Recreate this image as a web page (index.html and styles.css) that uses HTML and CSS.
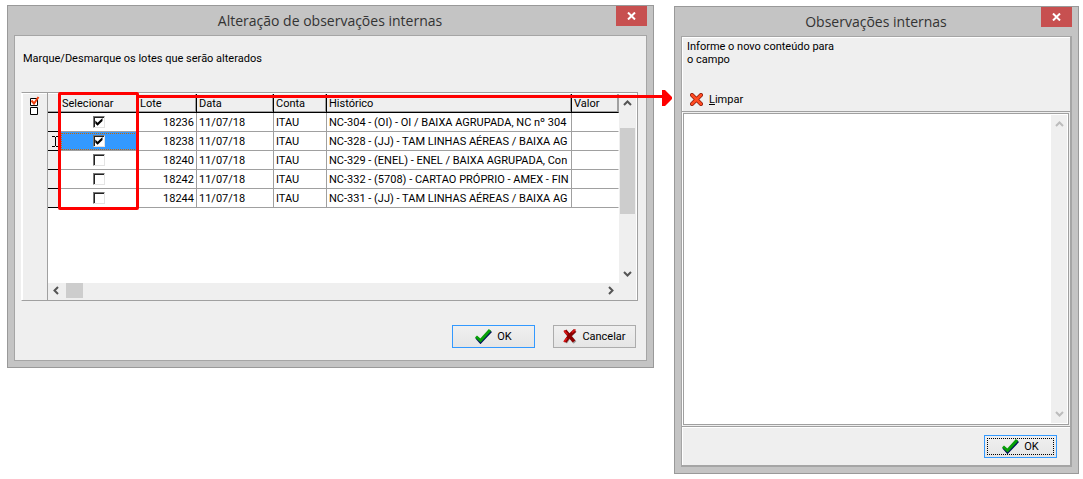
FILE: index.html
```html
<!DOCTYPE html>
<html lang="pt-BR">
<head>
<meta charset="utf-8">
<title>Alteração de observações internas</title>
<link rel="stylesheet" href="styles.css">
</head>
<body>
<main class="desktop">
  <section class="window window-lots">
    <header class="titlebar">
      <h1 class="title">Alteração de observações internas</h1>
      <button class="close" type="button" aria-label="Fechar"><svg width="9" height="8" viewBox="0 0 9 8"><path d="M1 0.5 8 7.5M8 0.5 1 7.5" stroke="#fff" stroke-width="2"/></svg></button>
    </header>
    <div class="client client-lots">
      <p class="intro">Marque/Desmarque os lotes que serão alterados</p>
      <div class="lots">
        <div class="side">
          <button class="toggle-all" type="button" aria-label="Marcar ou desmarcar todos">
            <svg width="11" height="20" viewBox="0 0 11 20" fill="none"><path d="M1.500 3.500h7v7h-7z M1.500 12.500h7v7h-7z" stroke="#000" fill="#fff"/><path d="M2.500 5.500 5 8.500 9.500 2" stroke="#f04010" stroke-width="2"/></svg>
          </button>
        </div>
        <div class="grid">
          <div class="viewport">
            <table class="table">
              <colgroup><col class="c-mark"><col class="c-sel"><col class="c-lot"><col class="c-date"><col class="c-acc"><col><col class="c-val"></colgroup>
              <thead><tr><th></th><th>Selecionar</th><th>Lote</th><th>Data</th><th>Conta</th><th>Histórico</th><th>Valor</th></tr></thead>
              <tbody>
                <tr><td class="mark"></td><td class="pick"><input type="checkbox" checked aria-label="Lote 18236"></td><td class="num">18236</td><td>11/07/18</td><td>ITAU</td><td>NC-304 - (OI) - OI / BAIXA AGRUPADA, NC nº 304</td><td></td></tr>
                <tr><td class="mark"><svg width="7" height="11" viewBox="0 0 7 11"><path d="M0 .5h3M4 .5h3M0 10.500h3M4 10.500h3M3.500 1v9" stroke="#000" stroke-width="1"/></svg></td><td class="pick current"><input type="checkbox" checked aria-label="Lote 18238"></td><td class="num">18238</td><td>11/07/18</td><td>ITAU</td><td>NC-328 - (JJ) - TAM LINHAS AÉREAS / BAIXA AG</td><td></td></tr>
                <tr><td class="mark"></td><td class="pick"><input type="checkbox" aria-label="Lote 18240"></td><td class="num">18240</td><td>11/07/18</td><td>ITAU</td><td>NC-329 - (ENEL) - ENEL / BAIXA AGRUPADA, Con</td><td></td></tr>
                <tr><td class="mark"></td><td class="pick"><input type="checkbox" aria-label="Lote 18242"></td><td class="num">18242</td><td>11/07/18</td><td>ITAU</td><td>NC-332 - (5708) - CARTAO PRÓPRIO - AMEX - FIN</td><td></td></tr>
                <tr><td class="mark"></td><td class="pick"><input type="checkbox" aria-label="Lote 18244"></td><td class="num">18244</td><td>11/07/18</td><td>ITAU</td><td>NC-331 - (JJ) - TAM LINHAS AÉREAS / BAIXA AG</td><td></td></tr>
              </tbody>
            </table>
          </div>
          <div class="vbar">
            <svg width="9" height="6" viewBox="0 0 9 6"><path d="M1 5 4.500 1.500 8 5" class="chev"/></svg>
            <span class="vthumb"></span>
            <svg width="9" height="6" viewBox="0 0 9 6"><path d="M1 1 4.500 4.500 8 1" class="chev"/></svg>
          </div>
          <div class="hbar">
            <svg width="6" height="9" viewBox="0 0 6 9"><path d="M5 1 1.500 4.500 5 8" class="chev"/></svg>
            <span class="hthumb"></span>
            <svg width="6" height="9" viewBox="0 0 6 9"><path d="M1 1 4.500 4.500 1 8" class="chev"/></svg>
          </div>
        </div>
        <div class="highlight"></div>
        <div class="arrow"></div>
      </div>
      <div class="actions">
        <button class="btn btn-default" type="button"><svg width="17" height="15" viewBox="0 0 17 15" fill="none"><path d="M1.500 8.500 5.500 13 16 2" stroke="#00105c" stroke-width="3"/><path d="M1 7.500 5.500 11.500 15 1" stroke="#08a008" stroke-width="3"/></svg><span>OK</span></button>
        <button class="btn" type="button"><svg width="14" height="15" viewBox="0 0 14 15" fill="none"><path d="M2.500 2.500 12 13.500M12.500 1.500Q7 6 2.500 13.500" stroke="#999" stroke-width="3.500"/><path d="M2 1.500 11 12.500M12 1.500Q6 6 2 13" stroke="#8c0000" stroke-width="3.500"/><path d="M1 1.500 4.500 5.500M12.500 .5 9 3.500M1 13 4 9" stroke="#e01818" stroke-width="1.500"/></svg><span>Cancelar</span></button>
      </div>
    </div>
  </section>

  <section class="window window-notes">
    <header class="titlebar">
      <h1 class="title">Observações internas</h1>
      <button class="close" type="button" aria-label="Fechar"><svg width="9" height="8" viewBox="0 0 9 8"><path d="M1 0.5 8 7.500M8 0.5 1 7.500" stroke="#fff" stroke-width="2"/></svg></button>
    </header>
    <div class="client client-notes">
      <div class="prompt">
        <label for="notes">Informe o novo conteúdo para<br>o campo</label>
        <button class="clear" type="button"><svg width="13" height="13" viewBox="0 0 13 13"><path d="M2 2 11 11M11 2 2 11" stroke="#8c1c0c" stroke-width="4" stroke-linecap="round"/><path d="M2 2 11 11M11 2 2 11" stroke="#ff4b22" stroke-width="2.500" stroke-linecap="round"/></svg><span><u>L</u>impar</span></button>
      </div>
      <div class="editor">
        <textarea id="notes"></textarea>
        <div class="vbar vbar-off">
          <svg width="9" height="6" viewBox="0 0 9 6"><path d="M1 5 4.500 1.500 8 5" class="chev"/></svg>
          <svg width="9" height="6" viewBox="0 0 9 6"><path d="M1 1 4.500 4.500 8 1" class="chev"/></svg>
        </div>
      </div>
      <div class="footer">
        <button class="btn btn-default btn-focus" type="button"><svg width="17" height="15" viewBox="0 0 17 15" fill="none"><path d="M1.500 8.500 5.500 13 16 2" stroke="#00105c" stroke-width="3"/><path d="M1 7.500 5.500 11.500 15 1" stroke="#08a008" stroke-width="3"/></svg><span>OK</span></button>
      </div>
    </div>
  </section>
</main>
</body>
</html>
```
FILE: styles.css
```css
* { box-sizing: border-box; }
body {
  margin: 0;
  background: #fff;
  color: #000;
  font: 11px/13px Roboto, "Liberation Sans", sans-serif;
}
button { font: inherit; color: inherit; padding: 0; margin: 0; border: 0; background: none; }
svg { display: block; flex: none; }

.desktop {
  display: grid;
  grid-template-columns: minmax(0, 647fr) minmax(0, 405fr);
  align-items: start;
  gap: 20px;
  padding: 5px 4px 4px 7px;
}
.window {
  border: 1px solid #999;
  background: #c4c4c4;
  padding: 0 6px 6px;
}
.window-notes { margin-top: 1px; }

.titlebar {
  display: flex;
  align-items: flex-start;
  height: 29px;
}
.title {
  flex: 1;
  margin: 0;
  padding-left: 30px;
  font: 14px/29px "Open Sans", "Noto Sans", sans-serif;
  color: #333;
  text-align: center;
  white-space: nowrap;
}
.close {
  display: flex;
  align-items: center;
  justify-content: center;
  width: 31px;
  height: 20px;
  background: #c75050;
}
.client { border: 1px solid #a5a5a5; background: #efefef; }

/* lots window */
.client-lots { padding: 16px 8px 12px 6px; }
.intro { margin: 0 0 27px 2px; }
.lots {
  position: relative;
  display: flex;
  border: 1px solid #a0a0a0;
  border-left-color: #fff;
}
.side {
  width: 26px;
  flex: none;
  border: solid #a0a0a0;
  border-width: 0 1px 0 0;
  padding: 2px 0 0 7px;
  box-shadow: inset 1px 1px #fff;
}
.grid {
  flex: 1;
  min-width: 0;
  display: grid;
  grid-template-columns: minmax(0, 1fr) 17px;
  grid-template-rows: minmax(189px, auto) 17px;
  border: solid #fff;
  border-width: 1px 1px 0 0;
  background: #efefef;
}
.viewport { background: #fff; overflow: hidden; }
.table {
  width: 100%;
  table-layout: fixed;
  border-collapse: separate;
  border-spacing: 0;
}
.c-mark { width: 12px; }
.c-sel { width: 78px; }
.c-lot { width: 59px; }
.c-date { width: 77px; }
.c-acc { width: 53px; }
.c-val { width: 47px; }
th, td {
  height: 19px;
  padding: 0 0 0 2px;
  overflow: hidden;
  white-space: nowrap;
  text-align: left;
  font-weight: normal;
  border: solid #a0a0a0;
  border-width: 0 1px 1px 0;
}
th { background: #efefef; border-color: #000; box-shadow: inset -1px -1px #a0a0a0; }
th:last-child { border-right-color: #a0a0a0; }
td:last-child { border-right-color: #fff; }
.table .num { text-align: right; padding-right: 2px; }
.table .mark { padding-left: 4px; background: #efefef; border-color: #000; }
.table .pick { padding: 0; }
.table .current {
  background: #3399ff;
  outline: 1px dotted #c60;
  outline-offset: -2px;
}
.pick input {
  appearance: none;
  display: block;
  width: 12px;
  height: 12px;
  margin: 0 auto;
  background: #fff;
  border: 1px solid #e3e3e3;
  border-top-color: #777;
  border-left-color: #777;
  box-shadow: inset 1px 1px #222;
}
.pick input:checked::before {
  content: "";
  display: block;
  width: 8px;
  height: 8px;
  margin: 1px;
  background: #000;
  clip-path: polygon(10% 30%, 38% 58%, 100% 0, 100% 38%, 38% 98%, 10% 70%);
}
.vbar {
  display: flex;
  flex-direction: column;
  align-items: center;
  padding: 6px 0;
  background: #efefef;
}
.vbar svg:last-child { margin-top: auto; }
.vthumb { width: 15px; height: 86px; margin-top: 22px; background: #cdcdcd; }
.hbar { display: flex; align-items: center; padding: 0 5px 2px; }
.hbar svg:last-child { margin-left: auto; }
.hthumb { width: 17px; height: 15px; margin-left: 7px; background: #cdcdcd; }
.chev { fill: none; stroke: #555; stroke-width: 2; }
.vbar-off .chev { stroke: #bcbcbc; }

/* callout drawn over the grid */
.highlight {
  position: absolute;
  left: 36px;
  top: -1px;
  width: 81px;
  height: 118px;
  border: 3px solid #f00;
  border-radius: 2px;
}
.arrow {
  position: absolute;
  left: 116px;
  right: -35px;
  top: -3px;
  height: 16px;
  background: #f00;
  clip-path: polygon(0 5px, calc(100% - 10px) 5px, calc(100% - 10px) 0, calc(100% - 7px) 0, 100% 7px, 100% 9px, calc(100% - 7px) 16px, calc(100% - 10px) 16px, calc(100% - 10px) 8px, 0 8px);
}

.actions {
  display: flex;
  justify-content: flex-end;
  gap: 18px;
  padding: 24px 2px 0 0;
}
.btn {
  display: flex;
  align-items: center;
  justify-content: center;
  gap: 5px;
  width: 83px;
  height: 23px;
  border: 1px solid #acacac;
  background: linear-gradient(#f0f0f0, #e5e5e5);
}
.btn-default { border-color: #3399ff; }
.btn-focus {
  width: 73px;
  outline: 1px dotted #000;
  outline-offset: -4px;
}

/* notes window */
.client-notes { box-shadow: inset 1px 1px #fff; border-right-width: 2px; border-bottom-width: 2px; }
.prompt {
  display: flex;
  flex-direction: column;
  align-items: flex-start;
  gap: 27px;
  height: 75px;
  padding: 3px 5px 0;
  border-bottom: 1px solid #a0a0a0;
}
.clear { display: flex; align-items: center; gap: 6px; padding-left: 3px; }
.editor {
  display: flex;
  height: 312px;
  margin: 1px 1px 0;
  padding: 0 1px 1px 0;
  border: 1px solid #a0a0a0;
  background: #fff;
}
.editor textarea {
  flex: 1;
  min-width: 0;
  border: 0;
  padding: 2px;
  margin: 0;
  resize: none;
  outline: 0;
  background: #fff;
  font: inherit;
}
.editor .vbar { width: 16px; margin-top: 1px; }
.footer {
  display: flex;
  justify-content: flex-end;
  margin-top: 1px;
  padding: 8px 13px 7px;
  border-top: 1px solid #a0a0a0;
  box-shadow: inset 1px 1px #fff;
}
```
